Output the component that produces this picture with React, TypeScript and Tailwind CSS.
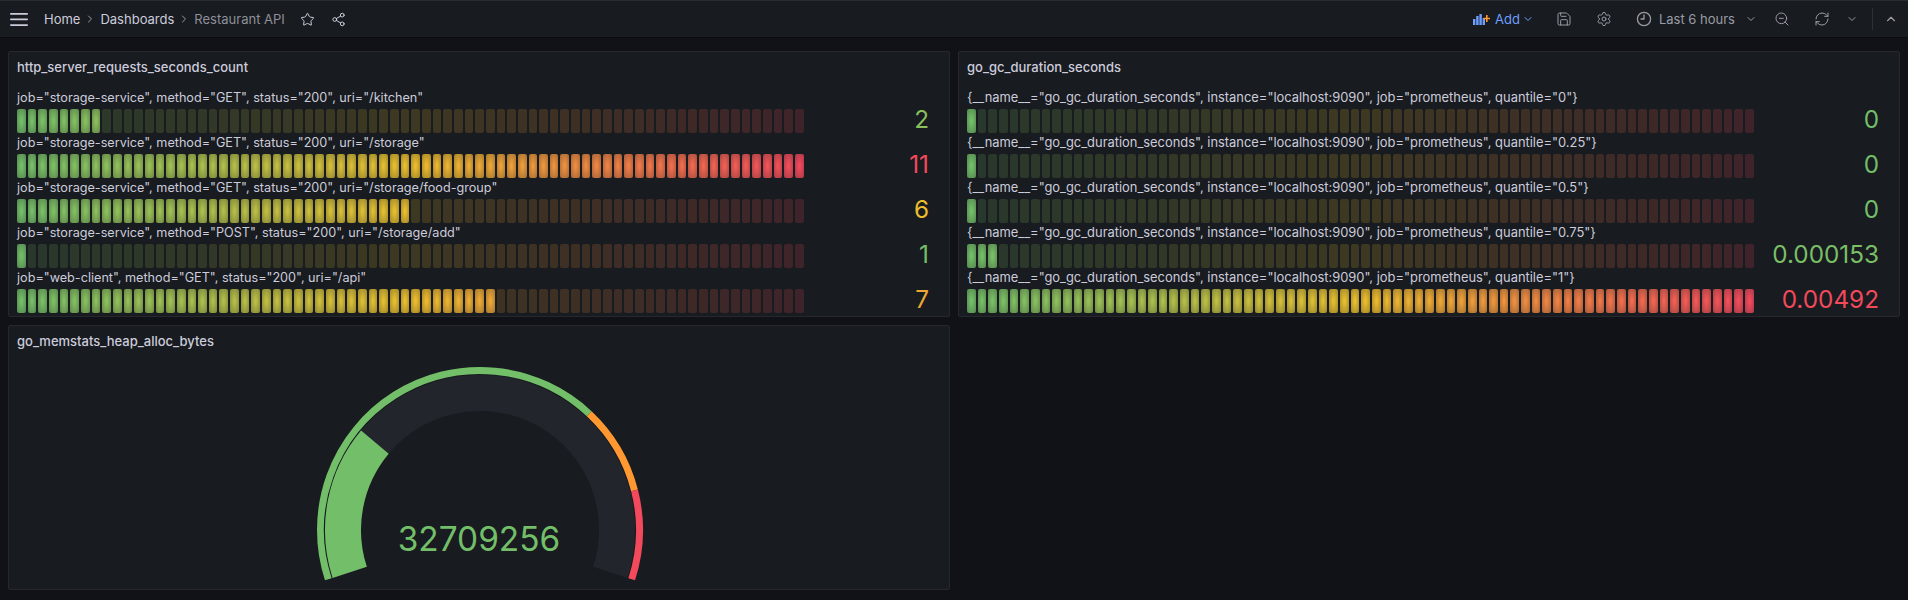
import React from 'react';
import { ChevronDown, ChevronRight, ChevronUp, RefreshCw, Save, Settings, Share2, Star, ZoomOut } from 'lucide-react';

type GaugeRow = {
  label: string;
  value: string;
  ratio: number;
};

const CELL_COUNT = 74;

const requestRows: GaugeRow[] = [
  { label: 'job="storage-service", method="GET", status="200", uri="/kitchen"', value: '2', ratio: 0.1 },
  { label: 'job="storage-service", method="GET", status="200", uri="/storage"', value: '11', ratio: 1 },
  { label: 'job="storage-service", method="GET", status="200", uri="/storage/food-group"', value: '6', ratio: 0.5 },
  { label: 'job="storage-service", method="POST", status="200", uri="/storage/add"', value: '1', ratio: 0 },
  { label: 'job="web-client", method="GET", status="200", uri="/api"', value: '7', ratio: 0.6 },
];

const gcRows: GaugeRow[] = [
  { label: '{__name__="go_gc_duration_seconds", instance="localhost:9090", job="prometheus", quantile="0"}', value: '0', ratio: 0 },
  { label: '{__name__="go_gc_duration_seconds", instance="localhost:9090", job="prometheus", quantile="0.25"}', value: '0', ratio: 0 },
  { label: '{__name__="go_gc_duration_seconds", instance="localhost:9090", job="prometheus", quantile="0.5"}', value: '0', ratio: 0 },
  { label: '{__name__="go_gc_duration_seconds", instance="localhost:9090", job="prometheus", quantile="0.75"}', value: '0.000153', ratio: 0.031 },
  { label: '{__name__="go_gc_duration_seconds", instance="localhost:9090", job="prometheus", quantile="1"}', value: '0.00492', ratio: 1 },
];

// green -> yellow -> red, same stops as the continuous GrYlRd scheme
const scaleColor = (t: number): [number, number, number] => {
  const green = [115, 191, 105];
  const yellow = [235, 190, 45];
  const red = [242, 73, 92];
  const [from, to, k] = t < 0.5 ? [green, yellow, t * 2] : [yellow, red, (t - 0.5) * 2];
  return [0, 1, 2].map((i) => Math.round(from[i] + (to[i] - from[i]) * k)) as [number, number, number];
};

const LcdBar = ({ ratio }: { ratio: number }) => {
  const lit = Math.max(1, Math.ceil(ratio * CELL_COUNT));
  return (
    <div className="flex h-6 w-[786px] gap-0.5">
      {Array.from({ length: CELL_COUNT }, (_, index) => {
        const [r, g, b] = scaleColor(index / (CELL_COUNT - 1));
        const style =
          index < lit
            ? { backgroundImage: `radial-gradient(rgb(${r},${g},${b}) 10%, rgba(${r},${g},${b},0.65))` }
            : { backgroundColor: `rgba(${r},${g},${b},0.18)` };
        return <div key={index} className="min-w-0 flex-1 rounded-[2px]" style={style} />;
      })}
    </div>
  );
};

const BarPanel = ({ title, rows, labelClass }: { title: string; rows: GaugeRow[]; labelClass: string }) => (
  <section className="h-[266px] rounded-[2px] border border-[#26282d] bg-[#181b1f]">
    <h2 className="flex h-[31px] items-center pl-2 text-[13px] leading-none font-medium text-[#ccccdc]">{title}</h2>
    <div className="pt-[7px] pl-2">
      {rows.map((row) => {
        const [r, g, b] = scaleColor(row.ratio);
        return (
          <div key={row.label} className="h-[45px]">
            <div className={`h-[17px] leading-4 whitespace-nowrap text-[#ccccdc] ${labelClass}`}>{row.label}</div>
            <div className="flex items-center">
              <LcdBar ratio={row.ratio} />
              <div className="flex-1 pr-5 pb-1 text-right text-[24.3px] leading-6" style={{ color: `rgb(${r},${g},${b})` }}>
                {row.value}
              </div>
            </div>
          </div>
        );
      })}
    </div>
  </section>
);

const CX = 173;
const CY = 174;

// 0 is the left end of the dial, 1 the right end
const point = (fraction: number, radius: number) => {
  const deg = -18 + fraction * 216;
  const rad = (deg * Math.PI) / 180;
  return `${(CX - radius * Math.cos(rad)).toFixed(2)} ${(CY - radius * Math.sin(rad)).toFixed(2)}`;
};

const arc = (from: number, to: number, radius: number) => {
  const large = (to - from) * 216 > 180 ? 1 : 0;
  return `M ${point(from, radius)} A ${radius} ${radius} 0 ${large} 1 ${point(to, radius)}`;
};

const Dial = () => (
  <svg width="344" height="232" viewBox="0 0 344 232" className="block">
    <path d={arc(0, 1, 137)} fill="none" stroke="#22252b" strokeWidth="36" />
    <path d={arc(0, 0.268, 137)} fill="none" stroke="#73bf69" strokeWidth="36" />
    <path d={arc(0, 0.7, 159.5)} fill="none" stroke="#73bf69" strokeWidth="7" />
    <path d={arc(0.7, 0.85, 159.5)} fill="none" stroke="#ff9830" strokeWidth="7" />
    <path d={arc(0.85, 1, 159.5)} fill="none" stroke="#f2495c" strokeWidth="7" />
    <text x={CX - 1} y="195" textAnchor="middle" fontSize="33.4" fill="#73bf69">
      32709256
    </text>
  </svg>
);

const AddIcon = () => (
  <svg width="17" height="16" viewBox="0 0 17 16" fill="#6e9fff" className="shrink-0">
    <rect x="0" y="8" width="2.4" height="6" />
    <rect x="3.2" y="5" width="2.4" height="9" />
    <rect x="6.4" y="3" width="2.4" height="11" />
    <rect x="9.6" y="7" width="2.4" height="7" />
    <path d="M13 4h1.6v2.7h2.4v1.6h-2.4V11H13V8.3h-2.4V6.7H13z" fill="#ff9830" />
  </svg>
);

const ClockIcon = () => (
  <svg width="16" height="16" viewBox="0 0 16 16" fill="none" stroke="currentColor" strokeWidth="1.3" className="ml-6 shrink-0">
    <circle cx="8" cy="8" r="6.6" />
    <path d="M8 3.8V8H5" strokeLinecap="round" strokeLinejoin="round" />
  </svg>
);

const TopBar = () => (
  <header className="flex h-[38px] items-center border-t border-b border-t-[#2a2c31] border-b-[#0b0c0f] bg-[#181b1f] text-[13px] leading-none">
    <svg width="18" height="13" viewBox="0 0 18 13" className="ml-2.5 text-[#ccccdc]" fill="currentColor">
      <rect y="0" width="18" height="1.7" rx="0.8" />
      <rect y="5.6" width="18" height="1.7" rx="0.8" />
      <rect y="11.2" width="18" height="1.7" rx="0.8" />
    </svg>
    <span className="ml-4 text-[#ccccdc]">Home</span>
    <ChevronRight size={12} className="mr-1 ml-1 text-[#9a9ba6]" />
    <span className="text-[#ccccdc]">Dashboards</span>
    <ChevronRight size={12} className="mr-1 ml-1 text-[#9a9ba6]" />
    <span className="text-[#8e8f99]">Restaurant API</span>
    <Star size={15} strokeWidth={1.6} className="ml-[15px] text-[#ccccdc]" />
    <Share2 size={15} strokeWidth={1.6} className="ml-4 text-[#ccccdc]" />
    <div className="ml-auto flex items-center text-[#9a9ba6]">
      <AddIcon />
      <span className="ml-[5px] text-[#6e9fff]">Add</span>
      <ChevronDown size={12} className="ml-0.5 text-[#6e9fff]" />
      <Save size={16} strokeWidth={1.5} className="ml-[22px]" />
      <Settings size={16} strokeWidth={1.5} className="ml-6" />
      <ClockIcon />
      <span className="ml-[7px]">Last 6 hours</span>
      <ChevronDown size={12} className="ml-2.5" />
      <ZoomOut size={16} strokeWidth={1.5} className="ml-[17px]" />
      <RefreshCw size={16} strokeWidth={1.5} className="ml-6" />
      <ChevronDown size={12} className="ml-4" />
      <div className="ml-3.5 h-[22px] w-px bg-[#2e3036]" />
      <ChevronUp size={14} className="mr-2.5 ml-[11px]" />
    </div>
  </header>
);

export default function App() {
  return (
    <div className="h-[600px] overflow-hidden bg-[#111217] font-['Inter',sans-serif]">
      <TopBar />
      <main className="grid grid-cols-2 gap-x-2 gap-y-2 px-2 pt-[13px]">
        <BarPanel title="http_server_requests_seconds_count" rows={requestRows} labelClass="text-[12.65px]" />
        <BarPanel title="go_gc_duration_seconds" rows={gcRows} labelClass="text-[12.9px]" />
        <section className="h-[265px] rounded-[2px] border border-[#26282d] bg-[#181b1f]">
          <h2 className="flex h-[30px] items-center pl-2 text-[13px] leading-none font-medium text-[#ccccdc]">go_memstats_heap_alloc_bytes</h2>
          <div className="flex justify-center">
            <Dial />
          </div>
        </section>
      </main>
    </div>
  );
}
